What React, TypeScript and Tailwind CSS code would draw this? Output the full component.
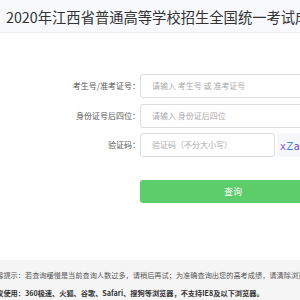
import React from "react";

const font = { fontFamily: '"Noto Sans CJK SC", "Noto Sans", sans-serif' };

function Row({ label, placeholder, short, captcha }: { label: string; placeholder: string; short?: boolean; captcha?: boolean }) {
  return (
    <div className="flex items-center h-[24px] shrink-0">
      <div className="w-[140px] shrink-0 text-right text-[8px] text-[#555] whitespace-nowrap">{label}</div>
      <div
        className={`${short ? "w-[135px]" : "w-[186px]"} h-[24px] shrink-0 border border-[#dcdcdc] rounded-[3px] pl-[11px] flex items-center text-[8px] text-[#aaa] whitespace-nowrap`}
      >
        {placeholder}
      </div>
      {captcha && (
        <div className="ml-[2px] w-[50px] h-[24px] shrink-0 bg-[#f6f7fb] flex items-center pl-[3px] pt-[2px] text-[10px] tracking-[0.5px]" style={{ fontFamily: '"DejaVu Sans", sans-serif' }}>
          <span className="text-[#8a5cd6]">x</span>
          <span className="text-[#3d8fe0]">Z</span>
          <span className="text-[#7a3fc9]">a</span>
        </div>
      )}
    </div>
  );
}

export default function App() {
  return (
    <div className="w-[300px] h-[300px] overflow-hidden bg-white flex flex-col" style={font}>
      <div className="h-[33px] shrink-0 bg-[#f7f9fc] border-b border-[#e8edf4] pl-[6px] pt-[2px] flex items-center whitespace-nowrap text-[14.3px] text-[#333]">
        2020年江西省普通高等学校招生全国统一考试成绩查询
      </div>
      <div className="pt-[41px] flex flex-col">
        <Row label="考生号/准考证号：" placeholder="请输入 考生号 或 准考证号" />
        <div className="h-[5.5px]" />
        <Row label="身份证号后四位：" placeholder="请输入 身份证后四位" />
        <div className="h-[5.5px]" />
        <Row label="验证码：" placeholder="验证码（不分大小写）" short captcha />
        <div className="h-[23px]" />
        <div className="ml-[140px] w-[186px] h-[23px] shrink-0 bg-[#5ccd6a] rounded-[3px] flex items-center justify-center text-white text-[9px]">
          查询
        </div>
      </div>
      <div className="mt-[57px] flex-1 bg-[#f5f5f5] flex flex-col whitespace-nowrap text-[7.2px]">
        <div className="mt-[10px] -ml-[11px] text-[#555]">
          温馨提示：若查询缓慢是当前查询人数过多，请稍后再试；为准确查询出您的高考成绩，请清除浏览器缓存
        </div>
        <div className="mt-[7px] -ml-[11px] text-[#333] font-bold">
          建议使用：360极速、火狐、谷歌、Safari、搜狗等浏览器，不支持IE8及以下浏览器。
        </div>
      </div>
    </div>
  );
}
